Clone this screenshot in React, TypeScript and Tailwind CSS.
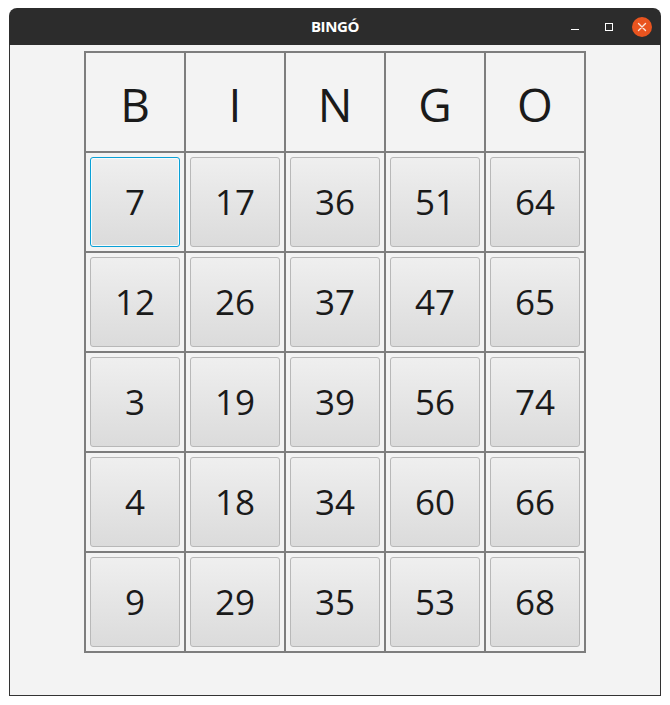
import React from 'react';

const HEADERS = ['B', 'I', 'N', 'G', 'O'];

const ROWS: number[][] = [
  [7, 17, 36, 51, 64],
  [12, 26, 37, 47, 65],
  [3, 19, 39, 56, 74],
  [4, 18, 34, 60, 66],
  [9, 29, 35, 53, 68],
];

const font = { fontFamily: '"Open Sans", "Noto Sans", sans-serif' };

const TitleBar: React.FC = () => (
  <div className="relative h-[37px] bg-[#2c2c2c] rounded-t-[8px] flex items-center justify-center">
    <span className="text-white text-[15px] font-bold tracking-tight" style={font}>
      BINGÓ
    </span>
    <div className="absolute right-[9px] top-0 h-full flex items-center">
      <div className="w-[34px] flex justify-center">
        <div className="w-[8px] h-px bg-white mt-[6px]" />
      </div>
      <div className="w-[34px] flex justify-center">
        <div className="w-[8px] h-[8px] border border-white" />
      </div>
      <div className="w-[20px] h-[20px] rounded-full bg-[#e9541f] flex items-center justify-center ml-[6px]">
        <svg width="10" height="10" viewBox="0 0 10 10">
          <path d="M1.5 1.5 L8.5 8.5 M8.5 1.5 L1.5 8.5" stroke="#fbe6dc" strokeWidth="1.4" strokeLinecap="round" />
        </svg>
      </div>
    </div>
  </div>
);

const NumberButton: React.FC<{ value: number; focused?: boolean }> = ({ value, focused }) => (
  <button
    className={`w-[90px] h-[90px] rounded-[3px] border bg-gradient-to-b from-[#efefef] to-[#dbdbdb] flex items-center justify-center text-[35px] text-[#1a1a1a] ${
      focused ? 'border-[#0aa0d6] shadow-[inset_0_0_0_1px_#f5fbfd]' : 'border-[#b8b8b8]'
    }`}
    style={font}
  >
    {value}
  </button>
);

export default function App() {
  return (
    <div className="w-[670px] h-[705px] bg-white pt-[8px] pl-[9px]">
      <div className="w-[652px] flex flex-col">
        <TitleBar />
        <div className="h-[651px] bg-[#f3f3f3] border-x border-b border-[#333] flex justify-center pt-[6px]">
          <div className="w-[502px] h-[602px] border-l-2 border-t-2 border-[#7d7d7d] grid grid-cols-5 grid-rows-6">
            {HEADERS.map((h) => (
              <div
                key={h}
                className="border-r-2 border-b-2 border-[#7d7d7d] flex items-center justify-center text-[46px] text-[#1a1a1a] pt-[4px]"
                style={font}
              >
                {h}
              </div>
            ))}
            {ROWS.map((row, r) =>
              row.map((n, c) => (
                <div key={`${r}-${c}`} className="border-r-2 border-b-2 border-[#7d7d7d] flex items-center justify-center">
                  <NumberButton value={n} focused={r === 0 && c === 0} />
                </div>
              ))
            )}
          </div>
        </div>
      </div>
    </div>
  );
}
